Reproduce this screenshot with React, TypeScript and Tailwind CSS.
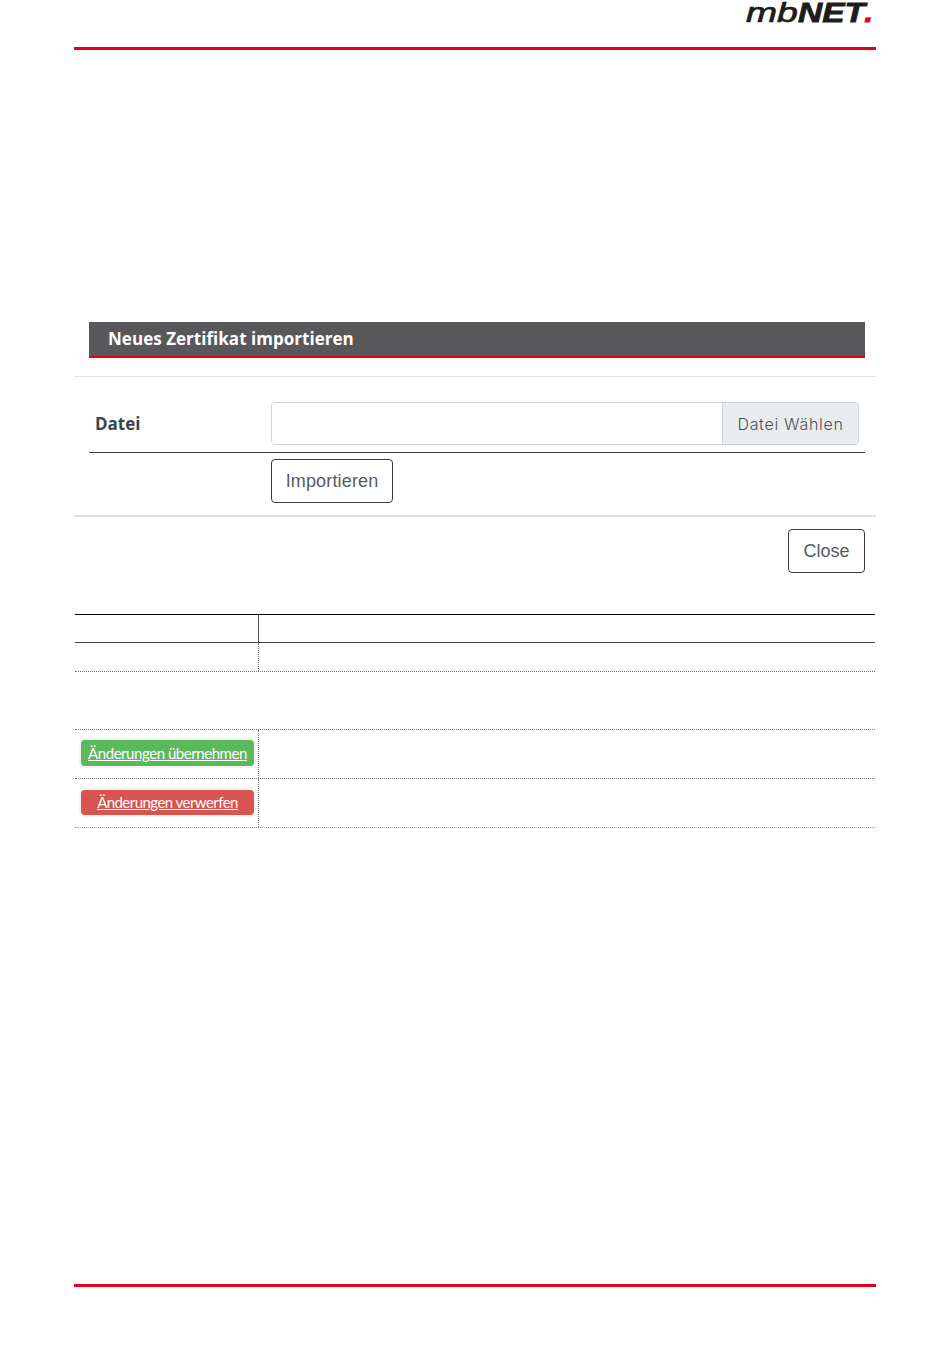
export default function App() {
  const cellLeft = "w-[184px] shrink-0 border-r border-dotted border-[#777]";
  return (
    <div className="w-[950px] h-[1360px] bg-white flex flex-col pl-[74px] pr-[74px] font-['Open_Sans',sans-serif]">
      <header className="h-[47px] flex justify-end items-start pr-[3px] shrink-0">
        <div className="w-[127px] h-[26px] flex italic text-[#1d1d1b] font-['Liberation_Sans',sans-serif] leading-[26px] text-[27px] whitespace-nowrap">
          <span className="inline-block w-[52px] font-normal origin-left scale-x-[1.38] [-webkit-text-stroke:0.7px_#1d1d1b]">mb</span>
          <span className="inline-block w-[67px] font-bold origin-left scale-x-[1.24] [-webkit-text-stroke:0.8px_#1d1d1b]">NET</span>
          <span className="inline-block w-[8px] font-bold text-[#e2001a] scale-x-[1.2] [-webkit-text-stroke:0.8px_#e2001a]">.</span>
        </div>
      </header>
      <div className="h-[3px] bg-[#e2001a] shrink-0" />

      <main className="flex-1 flex flex-col">
        <section className="mt-[272px] ml-[15px] mr-[11px] h-[36px] bg-[#58585a] border-b-2 border-[#e2001a] flex items-center pl-[19px] text-[17px] font-bold text-white tracking-[0.03px] shrink-0">
          Neues Zertifikat importieren
        </section>

        <div className="mt-[18px] border-t border-[#dee2e6] pt-[25px] shrink-0">
          <div className="ml-[15px] mr-[11px] h-[51px] border-b border-[#3c4249] flex items-start">
            <div className="w-[182px] shrink-0 pl-[6px] h-[43px] flex items-center text-[17px] font-bold text-[#3c4249]">Datei</div>
            <div className="w-[588px] h-[43px] flex border border-[#ced4da] rounded-[4px] overflow-hidden">
              <div className="flex-1 bg-white" />
              <div className="w-[136px] bg-[#e9ecef] border-l border-[#ced4da] flex items-center justify-center text-[16px] text-[#495057] tracking-[0.7px] font-['Inter',sans-serif] font-light">
                Datei Wählen
              </div>
            </div>
          </div>
          <div className="ml-[15px] mr-[11px] pl-[182px] pt-[6px] h-[62px]">
            <button className="w-[122px] h-[44px] border border-[#343a40] rounded-[4px] bg-white text-[#555b61] text-[18px] tracking-[0.15px] font-['Liberation_Sans',sans-serif]">
              Importieren
            </button>
          </div>
        </div>

        <div className="border-t-2 border-[#dee2e6] pt-[12px] pr-[11px] flex justify-end shrink-0">
          <button className="w-[77px] h-[44px] border border-[#343a40] rounded-[4px] bg-white text-[#555b61] text-[18px] font-['Liberation_Sans',sans-serif]">
            Close
          </button>
        </div>

        <div className="mt-[41px] mx-[1px] text-[15px] font-['Lato',sans-serif] shrink-0">
          <div className="h-[29px] border-t border-b border-t-black border-b-[#444] flex">
            <div className="w-[184px] shrink-0 border-r border-[#555]" />
          </div>
          <div className="h-[29px] border-b border-dotted border-[#777] flex">
            <div className={cellLeft} />
          </div>
          <div className="h-[58px] border-b border-dotted border-[#777]" />
          <div className="h-[49px] border-b border-dotted border-[#777] flex">
            <div className={`${cellLeft} flex items-center pl-[6px] pb-[2px]`}>
              <a href="#" className="w-[173px] h-[26px] rounded-[4px] bg-[#5cb85c] ring-2 ring-[#f5f3ef] text-white underline flex items-center justify-center tracking-[-0.45px]">
                Änderungen übernehmen
              </a>
            </div>
          </div>
          <div className="h-[49px] border-b border-dotted border-[#999] flex">
            <div className={`${cellLeft} flex items-center pl-[6px] pb-[2px]`}>
              <a href="#" className="w-[173px] h-[25px] rounded-[4px] bg-[#d9534f] ring-2 ring-[#f5f3ef] text-white underline flex items-center justify-center tracking-[-0.55px]">
                Änderungen verwerfen
              </a>
            </div>
          </div>
        </div>

        <div className="mt-auto mb-[73px] h-[3px] bg-[#e2001a] shrink-0" />
      </main>
    </div>
  );
}
